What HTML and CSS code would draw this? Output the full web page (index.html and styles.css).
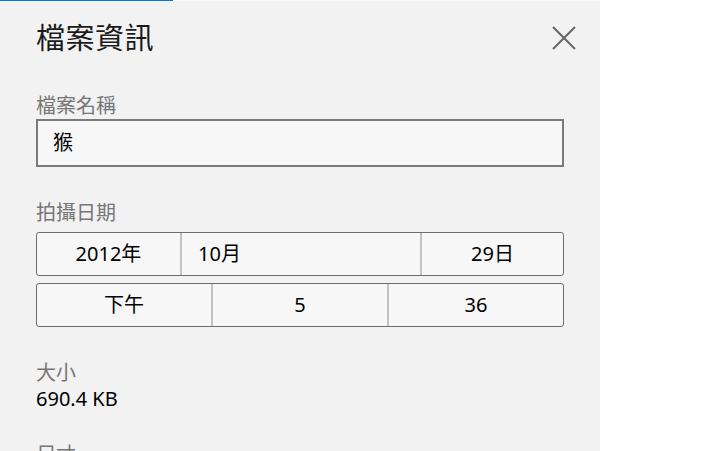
FILE: index.html
```html
<!DOCTYPE html>
<html lang="zh-Hant">
<head>
  <meta charset="UTF-8" />
  <meta name="viewport" content="width=device-width, initial-scale=1.0" />
  <title>檔案資訊</title>
  <link rel="stylesheet" href="styles.css">
</head>
<body>
  <div class="panel">
    <div class="progress"><div class="progress-bar"></div></div>

    <div class="content">
      <div class="header">
        <h1 class="title">檔案資訊</h1>
        <button class="close" aria-label="關閉">
          <svg width="24" height="24" viewBox="0 0 24 24">
            <path d="M1 1 L23 23 M23 1 L1 23" stroke="#666" stroke-width="2" fill="none" />
          </svg>
        </button>
      </div>

      <div class="field">
        <div class="label">檔案名稱</div>
        <div class="textbox">猴</div>
      </div>

      <div class="field">
        <div class="label">拍攝日期</div>
        <div class="picker date-picker">
          <div class="cell year">2012年</div>
          <div class="cell month">10月</div>
          <div class="cell day">29日</div>
        </div>
        <div class="picker time-picker">
          <div class="cell">下午</div>
          <div class="cell">5</div>
          <div class="cell">36</div>
        </div>
      </div>

      <div class="field">
        <div class="label">大小</div>
        <div class="value">690.4 KB</div>
      </div>

      <div class="field last">
        <div class="label">尺寸</div>
      </div>
    </div>
  </div>
</body>
</html>
```

FILE: styles.css
```css
body {
  margin: 0;
  background-color: #fff;
  font-family: "Noto Sans", "Noto Sans CJK TC", sans-serif;
  overflow: hidden;
}

.panel {
  width: 600px;
  height: 451px;
  background-color: #f2f2f2;
  overflow: hidden;
}

.progress {
  height: 1px;
  background-color: #f9f9f9;
}

.progress-bar {
  width: 173px;
  height: 1px;
  background-color: #0078d7;
}

.content {
  padding: 0 36px;
}

.header {
  display: flex;
  justify-content: space-between;
  align-items: center;
  margin-top: 17px;
}

.title {
  margin: 0;
  font-size: 29px;
  font-weight: normal;
  line-height: 40px;
  color: #1a1a1a;
  letter-spacing: 0.5px;
}

.close {
  width: 44px;
  height: 40px;
  margin-right: -22px;
  padding: 0;
  border: none;
  background: none;
  display: flex;
  align-items: center;
  justify-content: center;
}

.field {
  margin-top: 34px;
}

.field:nth-of-type(3) {
  margin-top: 32px;
}

.field:nth-of-type(4) {
  margin-top: 32px;
}

.field.last {
  margin-top: 30px;
}

.label {
  font-size: 20px;
  line-height: 27px;
  color: #767676;
}

.textbox {
  height: 44px;
  border: 2px solid #7a7a7a;
  background-color: #f7f7f7;
  padding-left: 15px;
  font-size: 20px;
  line-height: 44px;
  color: #000;
}

.picker {
  display: flex;
  height: 42px;
  border: 1px solid #6e6e6e;
  border-radius: 3px;
  background-color: #f7f7f7;
  font-size: 20px;
  color: #000;
}

.date-picker {
  margin-top: 6px;
}

.time-picker {
  margin-top: 7px;
}

.cell {
  display: flex;
  align-items: center;
  justify-content: center;
  line-height: 42px;
}

.cell + .cell {
  border-left: 2px solid #c2c2c2;
}

.year {
  width: 143px;
}

.month {
  flex: 1;
  justify-content: flex-start;
  padding-left: 16px;
}

.day {
  width: 141px;
}

.time-picker .cell {
  flex: 1;
}

.value {
  font-size: 20px;
  line-height: 25px;
  color: #000;
}
```
